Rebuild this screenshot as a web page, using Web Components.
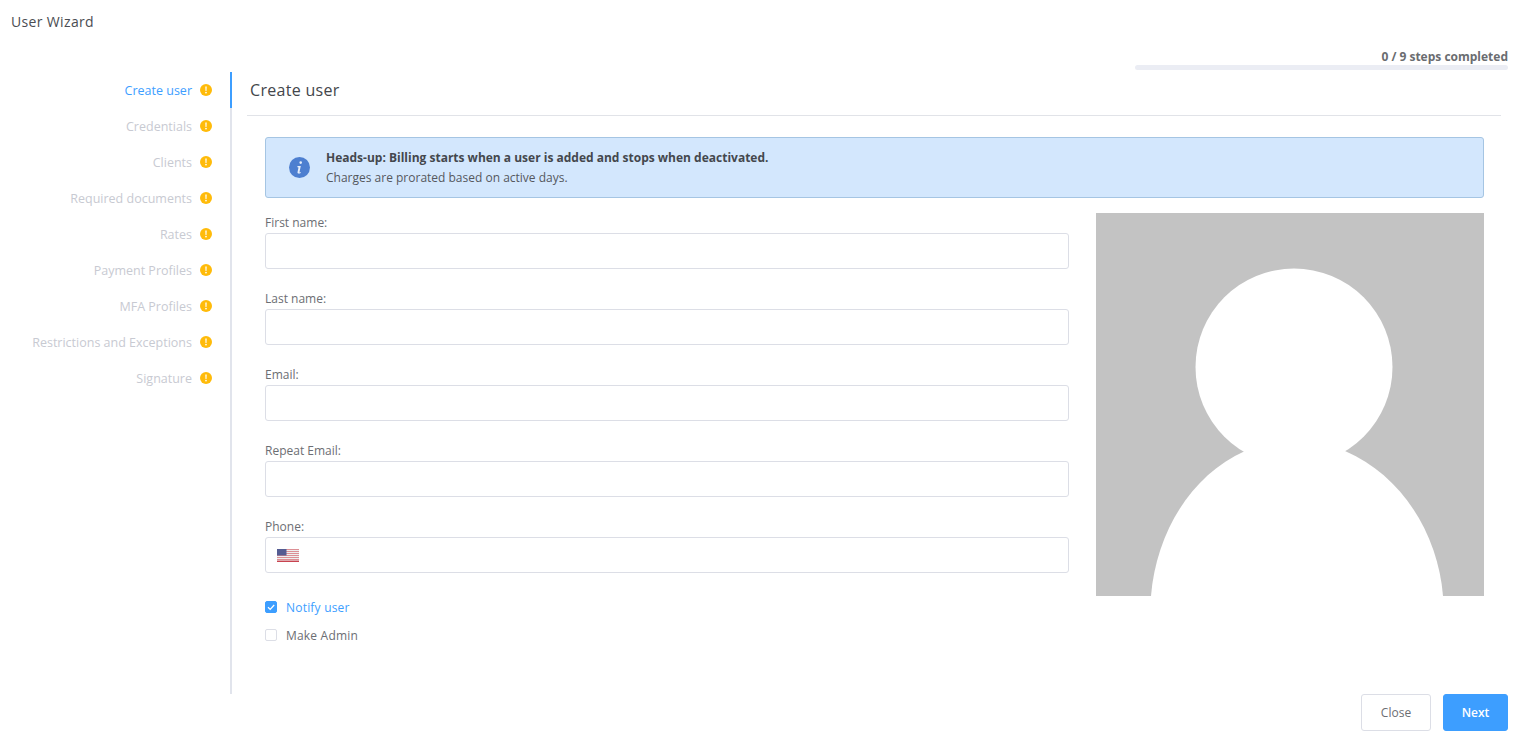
<!DOCTYPE html>
<html lang="en">
<head>
<meta charset="utf-8">
<title>User Wizard</title>
<style>
  html, body { margin: 0; height: 100%; background: #fff; }
  body { font-family: "Open Sans", "Noto Sans", sans-serif; color: #5e6066; }
</style>
</head>
<body>
<user-wizard>
  <wizard-step slot="steps" active>Create user</wizard-step>
  <wizard-step slot="steps">Credentials</wizard-step>
  <wizard-step slot="steps">Clients</wizard-step>
  <wizard-step slot="steps">Required documents</wizard-step>
  <wizard-step slot="steps">Rates</wizard-step>
  <wizard-step slot="steps">Payment Profiles</wizard-step>
  <wizard-step slot="steps">MFA Profiles</wizard-step>
  <wizard-step slot="steps">Restrictions and Exceptions</wizard-step>
  <wizard-step slot="steps">Signature</wizard-step>

  <info-alert>
    <b slot="head">Heads-up: Billing starts when a user is added and stops when deactivated.</b>
    Charges are prorated based on active days.
  </info-alert>

  <form-field slot="fields">First name:</form-field>
  <form-field slot="fields">Last name:</form-field>
  <form-field slot="fields">Email:</form-field>
  <form-field slot="fields">Repeat Email:</form-field>
  <form-field slot="fields" phone>Phone:</form-field>
  <check-row slot="fields" checked>Notify user</check-row>
  <check-row slot="fields">Make Admin</check-row>

  <wizard-button slot="actions">Close</wizard-button>
  <wizard-button slot="actions" primary>Next</wizard-button>
</user-wizard>

<script>
(function() {

    const FONT = '"Open Sans", "Noto Sans", sans-serif';

    class UserWizard extends HTMLElement {
        constructor() {
            super();
            this.attachShadow({mode: 'open'});
            this.shadowRoot.innerHTML = `
                <style>
                  :host { display: flex; flex-direction: column; height: 745px; box-sizing: border-box; font-family: ${FONT}; overflow: hidden; }
                  .title { height: 42px; padding: 13px 0 0 11px; box-sizing: border-box; font-size: 14px; line-height: 17px; color: #4a4d52; letter-spacing: .35px; }
                  .progress { display: flex; flex-direction: column; align-items: flex-end; height: 30px; padding-right: 15px; box-sizing: border-box; }
                  .progress span { font-size: 12px; line-height: 16px; height: 23px; padding-top: 7px; box-sizing: border-box; font-weight: 700; color: #6a6c70; }
                  .bar { width: 373px; height: 5px; border-radius: 3px; background: #ebedf4; }
                  .body { display: flex; height: 622px; margin-top: -0px; }
                  .steps { width: 232px; box-sizing: border-box; border-right: 2px solid #e1e4ec; flex: none; }
                  .main { flex: 1; min-width: 0; margin-top: -0px; }
                  h2 { margin: 0 0 0 18px; height: 36px; font-size: 16px; font-weight: 400; line-height: 36px; color: #43464b; letter-spacing: .3px; }
                  hr { margin: 7px 22px 0 15px; border: 0; border-top: 1px solid #e1e3e8; }
                  .content { padding: 21px 39px 0 33px; }
                  .row { display: flex; gap: 27px; margin-top: 15px; }
                  .fields { width: 804px; flex: none; }
                  .actions { display: flex; justify-content: flex-end; gap: 12px; padding-right: 15px; }
                </style>
                <div class="title">User Wizard</div>
                <div class="progress"><span>0 / 9 steps completed</span><div class="bar"></div></div>
                <div class="body">
                  <div class="steps"><slot name="steps"></slot></div>
                  <div class="main">
                    <h2>Create user</h2>
                    <hr>
                    <div class="content">
                      <slot></slot>
                      <div class="row">
                        <div class="fields"><slot name="fields"></slot></div>
                        <avatar-placeholder></avatar-placeholder>
                      </div>
                    </div>
                  </div>
                </div>
                <div class="actions"><slot name="actions"></slot></div>
            `;
        }
    }

    class WizardStep extends HTMLElement {
        constructor() {
            super();
            this.attachShadow({mode: 'open'});
            this.shadowRoot.innerHTML = `
                <style>
                  :host { display: flex; align-items: center; justify-content: flex-end; gap: 8px; height: 36px; margin-right: -2px; padding-right: 18px; box-sizing: border-box; font-size: 12.5px; color: #c8cad2; border-right: 2px solid transparent; }
                  :host([active]) { color: #3d9eff; border-right-color: #3d9eff; }
                  svg { width: 12px; height: 12px; flex: none; margin-top: -1px; }
                </style>
                <slot></slot>
                <svg viewBox="0 0 12 12"><circle cx="6" cy="6" r="6" fill="#ffbb0a"/><path d="M5.3 2.6h1.4l-.2 4.3H5.500zM6 7.700a.85.85 0 1 1 0 1.700a.85.85 0 0 1 0-1.700z" fill="#fff"/></svg>
            `;
        }
    }

    class InfoAlert extends HTMLElement {
        constructor() {
            super();
            this.attachShadow({mode: 'open'});
            this.shadowRoot.innerHTML = `
                <style>
                  :host { display: flex; align-items: center; height: 61px; box-sizing: border-box; padding-left: 23px; gap: 16px; background: #d3e7fd; border: 1px solid #a5c5e3; border-radius: 3px; font-size: 12px; line-height: 20px; color: #55585e; }
                  svg { width: 21px; height: 21px; flex: none; }
                  ::slotted(b) { display: block; font-weight: 700; color: #44474d; }
                </style>
                <svg viewBox="0 0 21 21"><circle cx="10.500" cy="10.500" r="10.500" fill="#4d7fd0"/><path d="M11.700 4.300a1.300 1.300 0 1 1 0 2.600a1.300 1.300 0 0 1 0-2.600zM8.500 9h3.300l-1.300 6c-.1.5.3.6 1.300.1l-.1.8c-1.300.8-3.400 1-3.200-.7l1-4.800c-.5-.2-.8-.2-1.100-.2z" fill="#e6eefa"/></svg>
                <div><slot name="head"></slot><slot></slot></div>
            `;
        }
    }

    class FormField extends HTMLElement {
        constructor() {
            super();
            this.attachShadow({mode: 'open'});
            const flag = this.hasAttribute('phone') ? `
                <svg class="flag" viewBox="0 0 22 13">
                  <rect width="22" height="13" fill="#eee"/>
                  <path d="M0 .5h22M0 2.500h22M0 4.500h22M0 6.500h22M0 8.500h22M0 10.500h22" stroke="#dc8f95" stroke-width="1"/>
                  <path d="M0 12.300h22" stroke="#c8434f" stroke-width="1.400"/>
                  <rect width="9.500" height="6.500" fill="#545c92"/>
                </svg>` : '';
            this.shadowRoot.innerHTML = `
                <style>
                  :host { display: block; height: 76px; font-size: 12px; color: #6c6e73; }
                  label { display: block; height: 20px; line-height: 20px; }
                  .box { display: flex; align-items: center; height: 36px; box-sizing: border-box; border: 1px solid #dcdee6; border-radius: 3px; padding-left: 11px; background: #fff; }
                  input { flex: 1; min-width: 0; border: 0; outline: 0; background: none; font: inherit; padding: 0; }
                  .flag { width: 22px; height: 13px; flex: none; margin-right: 8px; }
                </style>
                <label><slot></slot></label>
                <div class="box">${flag}<input type="text"></div>
            `;
        }
    }

    class CheckRow extends HTMLElement {
        constructor() {
            super();
            this.attachShadow({mode: 'open'});
            const tick = this.hasAttribute('checked')
                ? '<svg viewBox="0 0 12 12"><path d="M3 6.200l2.200 2.200L9.200 4" fill="none" stroke="#fff" stroke-width="1.300"/></svg>' : '';
            this.shadowRoot.innerHTML = `
                <style>
                  :host { display: flex; align-items: center; gap: 9px; height: 28px; font-size: 12px; letter-spacing: .2px; color: #6c6e73; }
                  :host([checked]) { color: #3d9eff; }
                  :host(:first-of-type) { margin-top: 0; }
                  .box { width: 12px; height: 12px; box-sizing: border-box; border: 1px solid #dcdee6; border-radius: 2px; flex: none; position: relative; }
                  :host([checked]) .box { border-color: #3d9eff; background: #3d9eff; }
                  svg { position: absolute; inset: -1px; width: 12px; height: 12px; }
                </style>
                <span class="box">${tick}</span><slot></slot>
            `;
        }
    }

    class AvatarPlaceholder extends HTMLElement {
        constructor() {
            super();
            this.attachShadow({mode: 'open'});
            this.shadowRoot.innerHTML = `
                <style>
                  :host { display: block; width: 388px; height: 383px; flex: none; }
                  svg { display: block; width: 100%; height: 100%; }
                </style>
                <svg viewBox="0 0 388 383">
                  <rect width="388" height="383" fill="#c3c3c3"/>
                  <circle cx="198" cy="154" r="98.500" fill="#fff"/>
                  <path d="M149 238C95 262 60 320 55 383H347C342 320 305 262 249 238Z" fill="#fff"/>
                </svg>
            `;
        }
    }

    class WizardButton extends HTMLElement {
        constructor() {
            super();
            this.attachShadow({mode: 'open'});
            this.shadowRoot.innerHTML = `
                <style>
                  :host { display: flex; align-items: center; justify-content: center; height: 37px; width: 70px; box-sizing: border-box; border: 1px solid #dcdee6; border-radius: 3px; font-size: 12px; color: #6c6e73; background: #fff; }
                  :host([primary]) { width: 65px; background: #3d9eff; border-color: #3d9eff; color: #fff; font-weight: 600; }
                </style>
                <slot></slot>
            `;
        }
    }

    customElements.define('user-wizard', UserWizard);
    customElements.define('wizard-step', WizardStep);
    customElements.define('info-alert', InfoAlert);
    customElements.define('form-field', FormField);
    customElements.define('check-row', CheckRow);
    customElements.define('avatar-placeholder', AvatarPlaceholder);
    customElements.define('wizard-button', WizardButton);

})();
</script>
</body>
</html>
